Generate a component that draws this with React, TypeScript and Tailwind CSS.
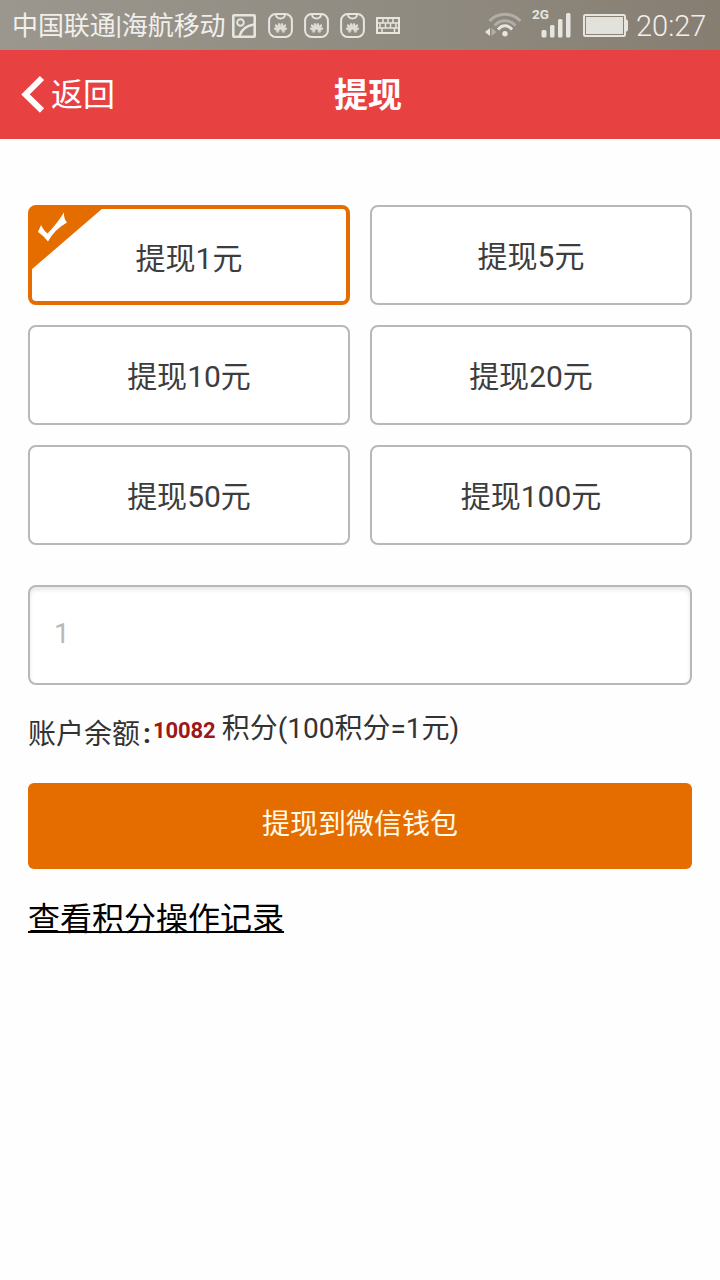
import clsx from 'clsx';

const amounts = [1, 5, 10, 20, 50, 100];

function PictureIcon() {
  return (
    <svg width="24" height="24" viewBox="0 0 24 24" fill="none" stroke="#e6e5e0">
      <rect x="1.3" y="1.3" width="21.4" height="21.4" rx="0.8" strokeWidth="2.6" />
      <circle cx="8.5" cy="8.5" r="3.3" strokeWidth="2" />
      <path d="M7.5 22C9.5 15.5 14.5 11.500 22 10.5" strokeWidth="2.4" />
    </svg>
  );
}

function HuaweiIcon() {
  return (
    <svg width="25" height="25" viewBox="0 0 25 25" fill="none" stroke="#e6e5e0">
      <rect x="1.1" y="1.1" width="22.8" height="22.8" rx="6.5" strokeWidth="2" />
      <path d="M8 1.5C8.3 6.8 16.7 6.8 17 1.5" strokeWidth="1.8" />
      <g fill="#dddcd6" stroke="none">
        <ellipse cx="11.4" cy="13.5" rx="1.4" ry="3.5" transform="rotate(-8 11.4 13.5)" />
        <ellipse cx="13.6" cy="13.5" rx="1.4" ry="3.5" transform="rotate(8 13.6 13.5)" />
        <ellipse cx="9.3" cy="14.3" rx="1.4" ry="3.5" transform="rotate(-36 9.3 14.3)" />
        <ellipse cx="15.7" cy="14.3" rx="1.4" ry="3.5" transform="rotate(36 15.7 14.3)" />
        <ellipse cx="8.5" cy="16.3" rx="1.3" ry="3" transform="rotate(-63 8.5 16.3)" />
        <ellipse cx="16.5" cy="16.3" rx="1.3" ry="3" transform="rotate(63 16.5 16.3)" />
        <path d="M7.5 18.2h4.2l-1 1.3H8.500zM17.5 18.2h-4.2l1 1.3h2.2z" />
      </g>
    </svg>
  );
}

function KeyboardIcon() {
  return (
    <svg width="24" height="17" viewBox="0 0 24 17" fill="none" stroke="#e6e5e0" strokeWidth="1.5">
      <rect x="1" y="1" width="22" height="15" strokeWidth="2" />
      <path d="M1 6h22M1 11h22M7 1v5M12 1v5M17 1v5M4 6v5M9.5 6v5M14.5 6v5M20 6v5M6 11v5M18.5 11v5" />
    </svg>
  );
}

function WifiIcon() {
  return (
    <svg width="38" height="26" viewBox="0 0 38 26" fill="none" strokeWidth="3">
      <path d="M4.5 9C13 0 27 0 35.5 9" stroke="#b1aea6" />
      <path d="M9.5 13.5C15.5 7 24.5 7 30.5 13.5" stroke="#b1aea6" />
      <path d="M13 17.5C17 12.5 23 12.5 27 17.5" stroke="#e6e5e0" />
      <circle cx="20" cy="21.7" r="2.7" fill="#e6e5e0" />
      <path d="M5 16v8l-5-4z" fill="#e6e5e0" />
      <path d="M6.5 16v8l5-4z" fill="#b1aea6" />
    </svg>
  );
}

function SignalIcon() {
  return (
    <svg width="42" height="32" viewBox="0 0 42 32" fill="#e6e5e0">
      <text x="0" y="12.5" fontFamily="Roboto, sans-serif" fontWeight="700" fontSize="13.5">2G</text>
      <rect x="9.5" y="24" width="5" height="7.5" rx="1.5" />
      <rect x="18" y="19" width="4.5" height="12.5" rx="1.5" />
      <rect x="26" y="13" width="4.5" height="18.5" rx="1.5" />
      <rect x="34" y="7" width="4.5" height="24.5" rx="1.5" />
    </svg>
  );
}

function BatteryIcon() {
  return (
    <svg width="45" height="23" viewBox="0 0 45 23">
      <rect x="1" y="1" width="41" height="21" rx="1.5" fill="none" stroke="#e6e5e0" strokeWidth="2" />
      <rect x="3" y="3" width="37" height="17" fill="#e2e1dc" />
      <path d="M43 5.5h1l1 1.5v9l-1 1.5h-1z" fill="#e6e5e0" />
    </svg>
  );
}

function StatusBar() {
  return (
    <div className="flex h-[50px] items-center bg-linear-to-r from-[#9b978e] via-[#8f8a80] via-60% to-[#877e72] pl-3 text-[#f0efec]">
      <span className="w-[220px] pt-0.5 text-[26px] leading-none tracking-[-0.1px] whitespace-nowrap">中国联通|海航移动</span>
      <div className="flex items-center gap-[11px] pt-px">
        <PictureIcon />
        <div className="ml-px flex gap-[11px]">
          <HuaweiIcon />
          <HuaweiIcon />
          <HuaweiIcon />
        </div>
        <KeyboardIcon />
      </div>
      <div className="ml-auto flex items-center">
        <WifiIcon />
        <div className="-mt-1.5 ml-[9px]">
          <SignalIcon />
        </div>
        <div className="ml-[9px]">
          <BatteryIcon />
        </div>
        <span className="ml-[8px] w-[84px] pt-[3px] text-[29px] leading-none font-light">20:27</span>
      </div>
    </div>
  );
}

function Header() {
  return (
    <header className="grid h-[89px] grid-cols-[1fr_auto_1fr] items-center bg-[#e84142] pl-[21px] text-white">
      <button className="flex items-center text-[32px] leading-none">
        <svg className="-mt-0.5" width="24" height="38" viewBox="0 0 24 38" fill="none" stroke="currentColor" strokeWidth="6">
          <path d="M21 3L4.5 19.500l16.500 16" />
        </svg>
        <span className="ml-[6px] pt-px">返回</span>
      </button>
      <h1 className="pr-[5px] text-[34px] leading-none font-bold">提现</h1>
    </header>
  );
}

function AmountButton({ amount, selected }: { amount: number; selected: boolean }) {
  return (
    <button
      className={clsx(
        'relative flex h-[100px] items-center justify-center rounded-lg bg-white text-[30px] leading-none text-[#3d3d3d]',
        selected ? 'border-4 border-[#e56d00] pt-2' : 'border-2 border-[#b8b8b8] pt-1',
      )}
    >
      {selected && (
        <svg className="absolute -top-px -left-px" width="74" height="65" viewBox="0 0 74 65">
          <path d="M0 0h72L0 62z" fill="#e56d00" />
          <path d="M7 24l3-7q3 6 6.500 8.500Q25 17 33 4.500q-.5 6 3 10Q24 21 17 33.500 12 27 7 24z" fill="#fff" />
        </svg>
      )}
      <span>提现{amount}元</span>
    </button>
  );
}

export default function App() {
  return (
    <div className="min-h-screen bg-[#fefefe] font-[Roboto,'Noto_Sans_CJK_SC',sans-serif]">
      <StatusBar />
      <Header />
      <main className="flex flex-col px-7 pt-[66px]">
        <div className="grid grid-cols-2 gap-5">
          {amounts.map((amount) => (
            <AmountButton key={amount} amount={amount} selected={amount === 1} />
          ))}
        </div>
        <input
          className="mt-10 h-[100px] rounded-lg border-2 border-[#b8b8b8] bg-white px-6 pb-1 text-[28px] shadow-[inset_0_3px_4px_#e8e8e8] placeholder:text-[#b8b8b8]"
          placeholder="1"
        />
        <p className="mt-[28px] flex h-10 items-start text-[28px] leading-none text-[#333]">
          <span className="flex w-[125px] pt-[8px]">
            账户余额<span className="-mt-px ml-[3px] font-bold">:</span>
          </span>
          <span className="pt-[7px] text-[22px] font-bold tracking-[-0.1px] text-[#9f1717]">10082</span>
          <span className="ml-[6px] pt-0.5">积分(100积分=1元)</span>
        </p>
        <button className="mt-[30px] h-[86px] rounded-md bg-[#e56d00] pb-0.5 text-[28px] leading-none text-[#fffbe8]">
          提现到微信钱包
        </button>
        <a
          className="mt-[34px] self-start text-[32px] leading-none text-black underline decoration-2 underline-offset-1 [text-decoration-skip-ink:none]"
          href="#"
        >
          查看积分操作记录
        </a>
      </main>
    </div>
  );
}
